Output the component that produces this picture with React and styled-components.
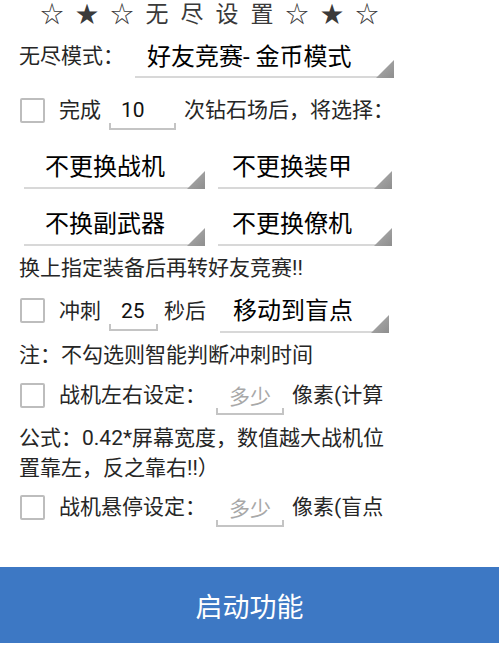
import React from "react";
import styled, { createGlobalStyle } from "styled-components";

const Global = createGlobalStyle`
  html, body { margin: 0; padding: 0; background: #ffffff; }
  body {
    font-family: "Roboto", "Noto Sans CJK SC", sans-serif;
    width: 503px;
    height: 655px;
    overflow: hidden;
  }
  * { box-sizing: border-box; }
`;

const Page = styled.div`
  display: flex;
  flex-direction: column;
  width: 503px;
`;

const Panel = styled.div`
  display: flex;
  flex-direction: column;
  width: 399px;
  padding-left: 19px;
`;

const Title = styled.div`
  display: flex;
  justify-content: center;
  gap: 13px;
  height: 30px;
  align-items: center;
  font-size: 23px;
  line-height: 30px;
  color: #3a3a3a;
  span { display: block; width: 22px; text-align: center; }
`;

const Row = styled.div`
  display: flex;
  align-items: center;
  height: ${(p) => p.h || 40}px;
  margin-top: ${(p) => p.mt || 0}px;
`;

const Label = styled.span`
  font-size: 21px;
  line-height: 30px;
  color: #262626;
  white-space: nowrap;
  margin-left: ${(p) => p.ml || 0}px;
`;

const Spinner = styled.div`
  position: relative;
  display: flex;
  align-items: center;
  width: ${(p) => p.w}px;
  height: ${(p) => p.h || 45}px;
  margin-left: ${(p) => p.ml || 0}px;
  padding-left: ${(p) => p.pl || 12}px;
  padding-bottom: 2px;
  border-bottom: 2px solid #d8d8d8;
  font-size: 24px;
  color: #000;
  white-space: nowrap;
  &::after {
    content: "";
    position: absolute;
    right: 0;
    bottom: -2px;
    width: 18px;
    height: 18px;
    background: linear-gradient(135deg, #b0b0b0, #8e8e8e);
    clip-path: polygon(100% 0, 100% 100%, 0 100%);
  }
`;

const SpinGrid = styled.div`
  display: grid;
  grid-template-columns: 181px 174px;
  column-gap: 13px;
  row-gap: 12px;
  margin-left: 5px;
  margin-top: 14px;
`;

const Check = styled.span`
  display: block;
  flex: none;
  width: 25px;
  height: 25px;
  margin-left: 1px;
  border: 2px solid #bdbdbd;
  border-radius: 2px;
  background: #fff;
`;

const Edit = styled.div`
  position: relative;
  display: flex;
  align-items: center;
  width: ${(p) => p.w}px;
  height: 40px;
  margin-left: ${(p) => p.ml || 8}px;
  margin-right: ${(p) => p.mr || 8}px;
  padding-left: ${(p) => p.pl || 12}px;
  font-size: 21px;
  color: ${(p) => (p.hint ? "#a8a8a8" : "#111")};
  &::after {
    content: "";
    position: absolute;
    left: 0;
    right: 0;
    bottom: 0;
    height: 5px;
    border: 2px solid #c4c4c4;
    border-top: none;
  }
`;

const Note = styled.div`
  font-size: 21px;
  line-height: 30px;
  color: #262626;
  margin-top: ${(p) => p.mt || 0}px;
`;

const StartButton = styled.button`
  width: 499px;
  height: 76px;
  margin-top: 40px;
  border: none;
  background: #3d78c4;
  color: #fff;
  font-family: "Noto Sans CJK SC", sans-serif;
  font-size: 27px;
  padding: 0;
`;

export default function App() {
  const title = ["☆", "★", "☆", "无", "尽", "设", "置", "☆", "★", "☆"];
  return (
    <>
      <Global />
      <Page>
        <Panel>
          <Title>
            {title.map((c, i) => (
              <span key={i}>{c}</span>
            ))}
          </Title>
          <Row h={44} mt={4}>
            <Label>无尽模式：</Label>
            <Spinner w={259} h={44} ml={11} pl={12}>
              好友竞赛- 金币模式
            </Spinner>
          </Row>
          <Row h={40} mt={12}>
            <Check />
            <Label ml={14}>完成</Label>
            <Edit w={67}>10</Edit>
            <Label>次钻石场后，将选择：</Label>
          </Row>
          <SpinGrid>
            <Spinner w={181} pl={21}>不更换战机</Spinner>
            <Spinner w={174} pl={14}>不更换装甲</Spinner>
            <Spinner w={181} pl={21}>不换副武器</Spinner>
            <Spinner w={174} pl={14}>不更换僚机</Spinner>
          </SpinGrid>
          <Note mt={7}>换上指定装备后再转好友竞赛!!</Note>
          <Row h={45} mt={5}>
            <Check />
            <Label ml={14}>冲刺</Label>
            <Edit w={49} mr={6}>25</Edit>
            <Label>秒后</Label>
            <Spinner w={169} ml={14} pl={13}>移动到盲点</Spinner>
          </Row>
          <Note mt={7}>注：不勾选则智能判断冲刺时间</Note>
          <Row h={40} mt={5}>
            <Check />
            <Label ml={14}>战机左右设定：</Label>
            <Edit w={68} ml={10} pl={13} hint>多少</Edit>
            <Label>像素(计算</Label>
          </Row>
          <Note mt={8}>公式：0.42*屏幕宽度，数值越大战机位置靠左，反之靠右!!）</Note>
          <Row h={40} mt={4}>
            <Check />
            <Label ml={14}>战机悬停设定：</Label>
            <Edit w={68} ml={10} pl={13} hint>多少</Edit>
            <Label>像素(盲点</Label>
          </Row>
        </Panel>
        <StartButton>启动功能</StartButton>
      </Page>
    </>
  );
}
